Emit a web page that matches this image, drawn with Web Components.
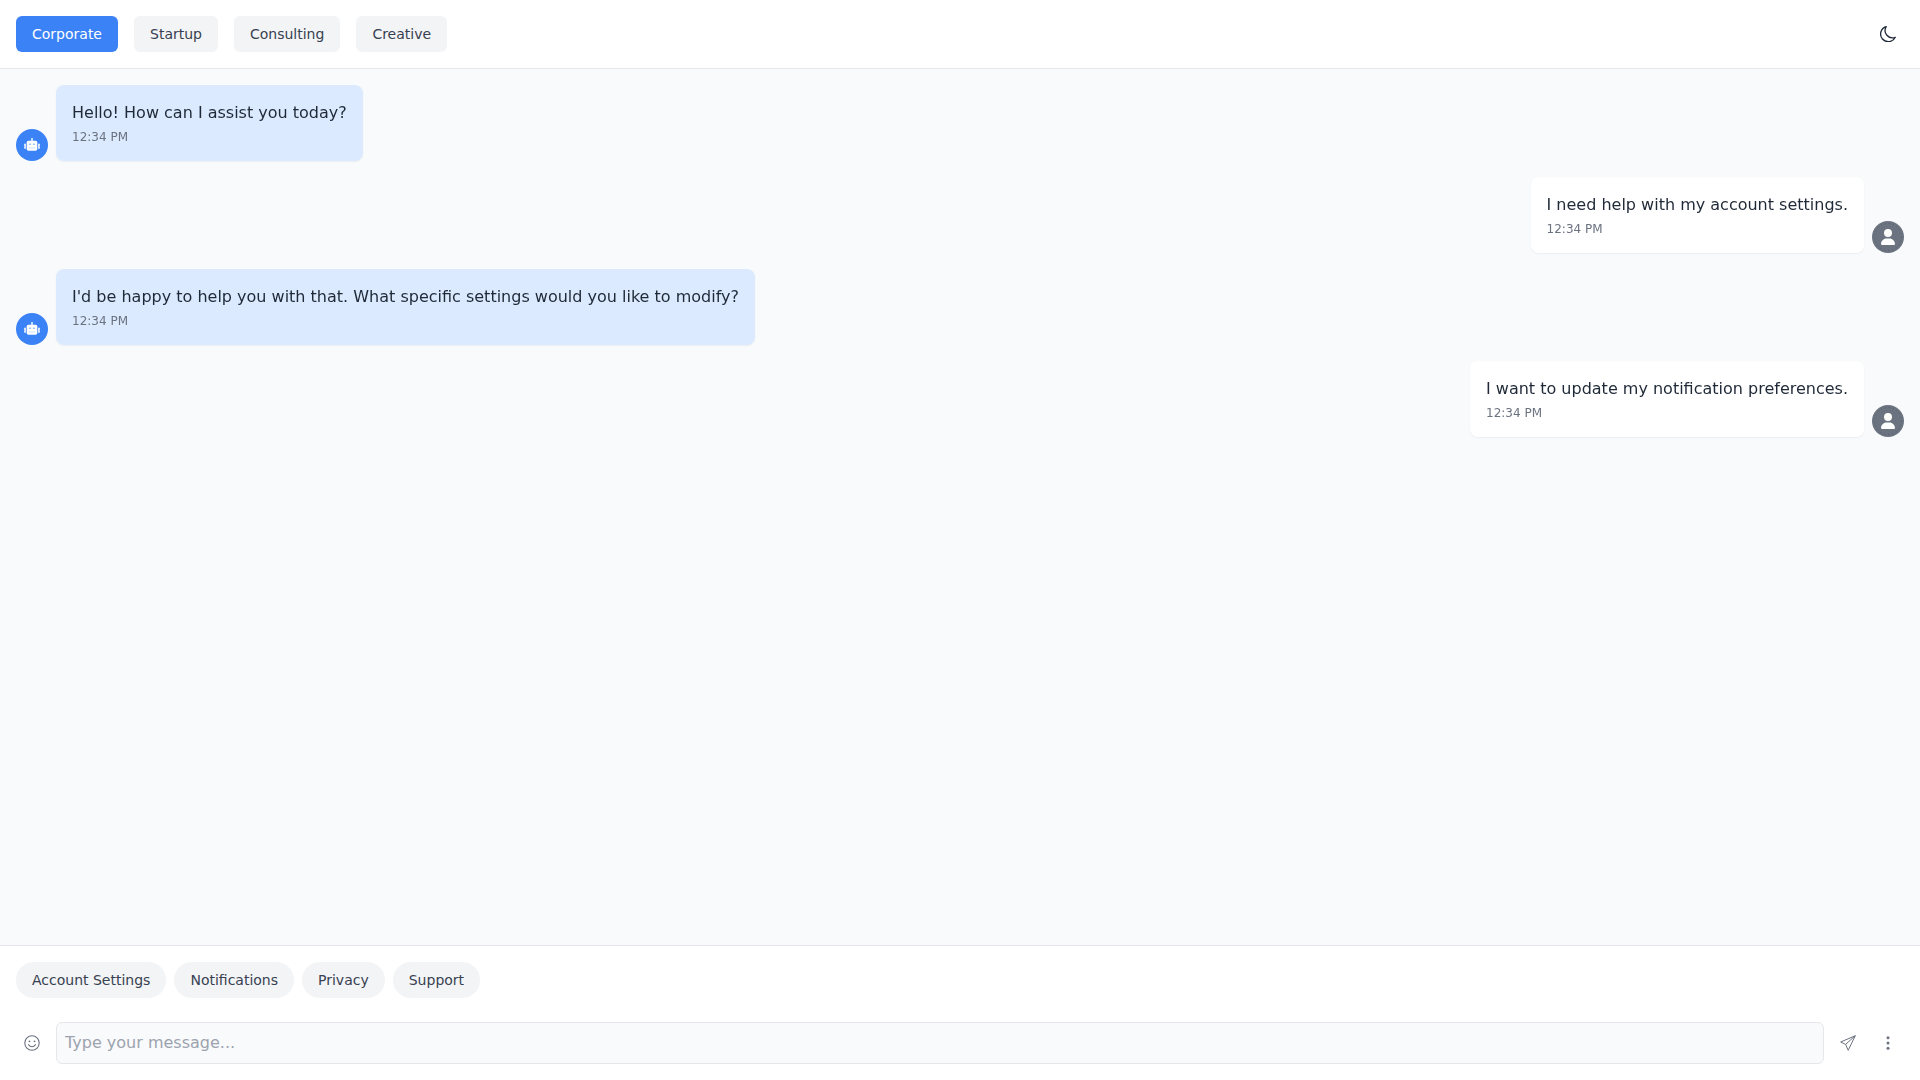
<!DOCTYPE html>
<html lang="en">
<head>
<meta charset="utf-8">
<title>Chat</title>
<style>
  html, body { margin: 0; height: 100%; }
  body { font-family: "DejaVu Sans", sans-serif; color: #1f2937; background: #f9fafb; }
</style>
</head>
<body>
<chat-app>
  <theme-bar slot="top">
    <theme-button active>Corporate</theme-button>
    <theme-button>Startup</theme-button>
    <theme-button>Consulting</theme-button>
    <theme-button>Creative</theme-button>
  </theme-bar>

  <chat-message from="bot" time="12:34 PM">Hello! How can I assist you today?</chat-message>
  <chat-message from="user" time="12:34 PM">I need help with my account settings.</chat-message>
  <chat-message from="bot" time="12:34 PM">I'd be happy to help you with that. What specific settings would you like to modify?</chat-message>
  <chat-message from="user" time="12:34 PM">I want to update my notification preferences.</chat-message>

  <chat-composer slot="bottom">
    <quick-chip>Account Settings</quick-chip>
    <quick-chip>Notifications</quick-chip>
    <quick-chip>Privacy</quick-chip>
    <quick-chip>Support</quick-chip>
  </chat-composer>
</chat-app>

<script>
const ICONS = {
  moon: '<svg viewBox="0 0 16 16" width="16" height="16" fill="none" stroke="#1f2937" stroke-width="1.3" stroke-linejoin="round"><path d="M6.200.6A7.700 7.700 0 1 0 15.300 11.300 7.400 7.400 0 0 1 6.200.6Z"/></svg>',
  robot: '<svg viewBox="0 0 16 14" width="16" height="14" fill="#fff"><rect x="7.300" y="0" width="1.400" height="3"/><rect x="2.700" y="2.700" width="10.600" height="10" rx="1.800"/><rect x=".3" y="5.500" width="1.500" height="5.500" rx=".7"/><rect x="14.200" y="5.500" width="1.500" height="5.500" rx=".7"/><g fill="#3b82f6"><g opacity=".8"><circle cx="6" cy="6.200" r=".8"/><circle cx="10" cy="6.200" r=".8"/></g><g opacity=".45"><rect x="5" y="9.600" width="1.400" height=".8"/><rect x="7.300" y="9.600" width="1.400" height=".8"/><rect x="9.600" y="9.600" width="1.400" height=".8"/></g></g></svg>',
  user: '<svg viewBox="0 0 448 512" width="14" height="16" fill="#fff"><path d="M224 256a128 128 0 1 0 0-256 128 128 0 1 0 0 256zm-45.700 48C79.800 304 0 383.800 0 482.300 0 498.700 13.300 512 29.700 512h388.600c16.400 0 29.700-13.300 29.700-29.700C448 383.800 368.200 304 269.700 304h-91.400z"/></svg>',
  smile: '<svg viewBox="0 0 16 16" width="16" height="16" fill="none" stroke="#6b7280" stroke-width="1.1"><circle cx="8" cy="8" r="7.200"/><circle cx="5.500" cy="6.300" r=".9" fill="#6b7280" stroke="none"/><circle cx="10.500" cy="6.300" r=".9" fill="#6b7280" stroke="none"/><path d="M4.600 9.700C5.400 11 6.600 11.700 8 11.700S10.600 11 11.400 9.700" stroke-linecap="round"/></svg>',
  send: '<svg viewBox="0 0 16 16" width="16" height="16" fill="none" stroke="#6b7280" stroke-width="1" stroke-linejoin="round"><path d="M15.300.7.700 7l4.900 2.400 2.600 5.900L15.300.7ZM5.600 9.400 15.300.7"/></svg>',
  dots: '<svg viewBox="0 0 16 16" width="16" height="16" fill="#6b7280"><circle cx="8" cy="2.800" r="1.500"/><circle cx="8" cy="8" r="1.500"/><circle cx="8" cy="13.200" r="1.500"/></svg>',
  ring: '<svg class="ring" viewBox="0 0 32 32" width="32" height="32" fill="none" stroke="#565d6b" stroke-width="1" stroke-dasharray="1 3"><circle cx="16" cy="16" r="13.500"/></svg>'
};

class ChatApp extends HTMLElement {
  constructor() {
    super();
    this.attachShadow({ mode: "open" });
    this.shadowRoot.innerHTML = `
      <style>
        :host { display: flex; flex-direction: column; height: 100vh; background: #f9fafb; }
        main { flex: 1; min-height: 0; overflow: hidden; padding: 16px; display: flex; flex-direction: column; gap: 16px; }
      </style>
      <slot name="top"></slot>
      <main><slot></slot></main>
      <slot name="bottom"></slot>
    `;
  }
}

class ThemeBar extends HTMLElement {
  constructor() {
    super();
    this.attachShadow({ mode: "open" });
    this.shadowRoot.innerHTML = `
      <style>
        :host { display: flex; justify-content: space-between; align-items: center; padding: 16px; background: #fff; border-bottom: 1px solid #e5e7eb; }
        .group { display: flex; gap: 16px; }
        button { width: 32px; height: 32px; padding: 0; border: 0; background: none; display: flex; align-items: center; justify-content: center; }
      </style>
      <div class="group"><slot></slot></div>
      <button aria-label="Toggle theme">${ICONS.moon}</button>
    `;
  }
}

class ThemeButton extends HTMLElement {
  constructor() {
    super();
    this.attachShadow({ mode: "open" });
    this.shadowRoot.innerHTML = `
      <style>
        :host { display: block; height: 36px; padding: 0 16px; border-radius: 6px; background: #f3f4f6; color: #374151; font-size: 14px; line-height: 36px; }
        :host([active]) { background: #3b82f6; color: #fff; }
      </style>
      <slot></slot>
    `;
  }
}

class ChatMessage extends HTMLElement {
  constructor() {
    super();
    this.attachShadow({ mode: "open" });
    const isBot = this.getAttribute("from") === "bot";
    this.shadowRoot.innerHTML = `
      <style>
        :host { display: flex; align-items: flex-end; gap: 8px; will-change: transform; }
        :host([from="user"]) { flex-direction: row-reverse; }
        .avatar { position: relative; width: 32px; height: 32px; border-radius: 50%; flex: none; display: flex; align-items: center; justify-content: center; background: #3b82f6; }
        :host([from="user"]) .avatar { background: #6b7280; }
        .ring { position: absolute; inset: 0; }
        .bubble { padding: 16px; border-radius: 8px; background: #dbeafe; box-shadow: 0 1px 2px rgba(0,0,0,.05); }
        :host([from="user"]) .bubble { background: #fff; }
        .text { font-size: 16px; line-height: 24px; color: #1f2937; }
        .time { margin-top: 4px; font-size: 12px; line-height: 16px; color: #6b7280; }
      </style>
      <div class="avatar">${isBot ? ICONS.robot : ICONS.ring + ICONS.user}</div>
      <div class="bubble">
        <div class="text"><slot></slot></div>
        <div class="time">${this.getAttribute("time")}</div>
      </div>
    `;
  }
}

class ChatComposer extends HTMLElement {
  constructor() {
    super();
    this.attachShadow({ mode: "open" });
    this.shadowRoot.innerHTML = `
      <style>
        :host { display: block; padding: 16px; background: #fff; border-top: 1px solid #e5e7eb; }
        .chips { display: flex; gap: 8px; margin-bottom: 24px; }
        .row { display: flex; align-items: center; gap: 8px; }
        button { width: 32px; height: 32px; flex: none; padding: 0; border: 0; background: none; display: flex; align-items: center; justify-content: center; }
        input { flex: 1; min-width: 0; box-sizing: border-box; padding: 8px; border: 1px solid #e5e7eb; border-radius: 6px; background: #f9fafb; font: 16px/24px "DejaVu Sans", sans-serif; color: #1f2937; outline: none; }
        input::placeholder { color: #9ca3af; opacity: 1; }
      </style>
      <div class="chips"><slot></slot></div>
      <div class="row">
        <button aria-label="Emoji">${ICONS.smile}</button>
        <input type="text" placeholder="Type your message...">
        <button aria-label="Send">${ICONS.send}</button>
        <button aria-label="More">${ICONS.dots}</button>
      </div>
    `;
  }
}

class QuickChip extends HTMLElement {
  constructor() {
    super();
    this.attachShadow({ mode: "open" });
    this.shadowRoot.innerHTML = `
      <style>
        :host { display: block; height: 36px; padding: 0 16px; border-radius: 18px; background: #f3f4f6; color: #374151; font-size: 14px; line-height: 36px; }
      </style>
      <slot></slot>
    `;
  }
}

customElements.define("chat-app", ChatApp);
customElements.define("theme-bar", ThemeBar);
customElements.define("theme-button", ThemeButton);
customElements.define("chat-message", ChatMessage);
customElements.define("chat-composer", ChatComposer);
customElements.define("quick-chip", QuickChip);
</script>
</body>
</html>
